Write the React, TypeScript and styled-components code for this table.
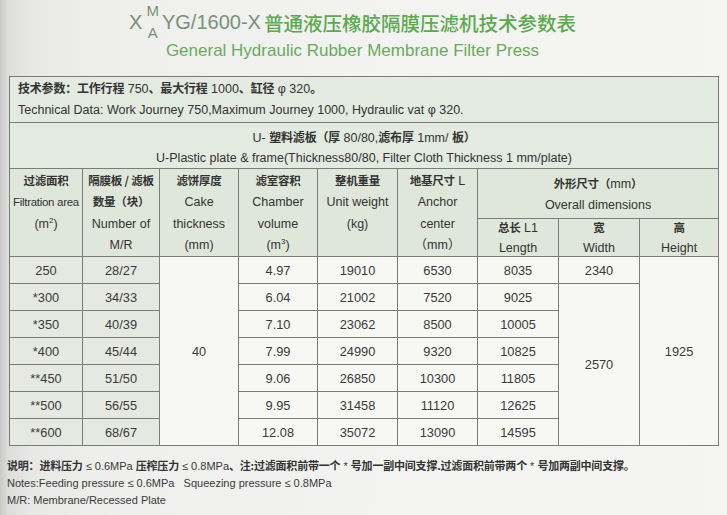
import React from 'react';
import styled, { createGlobalStyle } from 'styled-components';

const SANS = `"Liberation Sans", Arial, "Noto Sans CJK SC", sans-serif`;
const CJK = `"Noto Sans CJK SC", "Liberation Sans", sans-serif`;

const GlobalStyle = createGlobalStyle`
  html, body { margin: 0; padding: 0; }
  body { background: #eeeeec; font-family: ${SANS}; }
`;

const Page = styled.div`
  width: 727px;
  height: 515px;
  overflow: hidden;
  box-sizing: border-box;
  padding-left: 9px;
  display: flex;
  flex-direction: column;
  background: linear-gradient(90deg, #c9c9c7 0px, #dcdcda 8px, #e8e8e6 30px, #efefed 120px, #f3f3f1 60%, #f5f5f3 100%);
`;

const Header = styled.header`
  flex: 0 0 76px;
  width: 709px;
  box-sizing: border-box;
  padding-right: 22px;
  display: flex;
  flex-direction: column;
  align-items: center;
`;

const TitleRow = styled.div`
  display: flex;
  align-items: center;
  height: 44px;
`;

const Model = styled.span`
  font-family: ${SANS};
  font-size: 20px;
  color: #7a9176;
  line-height: 1;
`;

const Stack = styled.span`
  display: inline-flex;
  flex-direction: column;
  align-items: center;
  margin: 0 3px 0 4px;
  font-family: ${SANS};
  font-size: 15px;
  line-height: 22px;
  color: #7a9176;
`;

const TitleCn = styled.span`
  font-family: ${CJK};
  font-size: 19.5px;
  font-weight: 500;
  color: #5aaa4e;
  margin-left: 3px;
`;

const Subtitle = styled.div`
  font-family: ${SANS};
  font-size: 17px;
  color: #6aab5c;
  line-height: 20px;
  margin-top: -3px;
`;

const Table = styled.table`
  flex: 0 0 auto;
  width: 709px;
  border-collapse: collapse;
  table-layout: fixed;
  font-family: ${SANS};
  color: #333;
`;

const Row = styled.tr<{ $h: number }>`
  height: ${(p) => p.$h}px;
`;

const InfoCell = styled.td<{ $center?: boolean }>`
  border: 1px solid #7b7b79;
  background: #e3eadf;
  padding: ${(p) => (p.$center ? '5px 0 0 0' : '2px 0 0 8px')};
  text-align: ${(p) => (p.$center ? 'center' : 'left')};
  vertical-align: top;
  font-size: 12.5px;
  line-height: ${(p) => (p.$center ? '20px' : '21px')};
  color: #333;
`;

const Han = styled.span<{ $size: number }>`
  font-family: ${CJK};
  font-size: ${(p) => p.$size}px;
  font-weight: 700;
  line-height: 1;
  letter-spacing: -0.2px;
  color: #333;
`;

const Line = styled.div<{ $lh?: number; $mb?: number }>`
  ${(p) => (p.$lh ? `line-height: ${p.$lh}px;` : '')}
  ${(p) => (p.$mb ? `margin-bottom: ${p.$mb}px;` : '')}
`;

const HeadCell = styled.th<{ $pt?: number; $lh?: number }>`
  border: 1px solid #7b7b79;
  background: #dfe7da;
  font-weight: normal;
  vertical-align: top;
  padding: ${(p) => p.$pt ?? 2}px 0 0 0;
  text-align: center;
  font-size: 12.5px;
  line-height: ${(p) => p.$lh ?? 21.25}px;
  color: #333;
  white-space: nowrap;
`;

const TightLine = styled.div`
  font-size: 11.5px;
  letter-spacing: -0.3px;
`;

const Sup = styled.sup`
  font-size: 8px;
  vertical-align: 5px;
  line-height: 0;
`;

const DataCell = styled.td<{ $tint?: boolean }>`
  border: 1px solid #7b7b79;
  background: ${(p) => (p.$tint ? '#e5e9e1' : '#f7f7f4')};
  text-align: center;
  vertical-align: middle;
  font-size: 12.8px;
  color: #3a3a3a;
  padding: 0;
`;

const Notes = styled.div`
  margin: 12px 0 0 -2px;
  font-family: ${SANS};
  font-size: 11px;
  line-height: 17px;
  color: #3a3a3a;
`;

const colWidths = [73, 77, 79, 79, 80, 80, 81, 81, 79];

const rows = [
  { area: '250', num: '28/27', vol: '4.97', weight: '19010', anchor: '6530', len: '8035' },
  { area: '*300', num: '34/33', vol: '6.04', weight: '21002', anchor: '7520', len: '9025' },
  { area: '*350', num: '40/39', vol: '7.10', weight: '23062', anchor: '8500', len: '10005' },
  { area: '*400', num: '45/44', vol: '7.99', weight: '24990', anchor: '9320', len: '10825' },
  { area: '**450', num: '51/50', vol: '9.06', weight: '26850', anchor: '10300', len: '11805' },
  { area: '**500', num: '56/55', vol: '9.95', weight: '31458', anchor: '11120', len: '12625' },
  { area: '**600', num: '68/67', vol: '12.08', weight: '35072', anchor: '13090', len: '14595' },
];

const H = ({ children }: { children: React.ReactNode }) => <Han $size={11.5}>{children}</Han>;

export default function App() {
  return (
    <>
      <GlobalStyle />
      <Page>
        <Header>
          <TitleRow>
            <Model>X</Model>
            <Stack>
              <span>M</span>
              <span>A</span>
            </Stack>
            <Model>YG/1600-X</Model>
            <TitleCn>普通液压橡胶隔膜压滤机技术参数表</TitleCn>
          </TitleRow>
          <Subtitle>General Hydraulic Rubber Membrane Filter Press</Subtitle>
        </Header>
        <Table>
          <colgroup>
            {colWidths.map((w, i) => (
              <col key={i} style={{ width: w }} />
            ))}
          </colgroup>
          <tbody>
            <Row $h={46}>
              <InfoCell colSpan={9}>
                <Line>
                  <Han $size={12}>技术参数：工作行程</Han> 750<Han $size={12}>、最大行程</Han> 1000
                  <Han $size={12}>、缸径</Han> φ 320<Han $size={12}>。</Han>
                </Line>
                <Line>Technical Data: Work Journey 750,Maximum Journey 1000, Hydraulic vat φ 320.</Line>
              </InfoCell>
            </Row>
            <Row $h={46}>
              <InfoCell colSpan={9} $center>
                <Line>
                  U- <Han $size={12}>塑料滤板（厚</Han> 80/80,<Han $size={12}>滤布厚</Han> 1mm/ <Han $size={12}>板）</Han>
                </Line>
                <Line>U-Plastic plate &amp; frame(Thickness80/80, Filter Cloth Thickness 1 mm/plate)</Line>
              </InfoCell>
            </Row>
            <Row $h={50}>
              <HeadCell rowSpan={2}>
                <Line><H>过滤面积</H></Line>
                <TightLine>Filtration area</TightLine>
                <Line>
                  (m<Sup>2</Sup>)
                </Line>
              </HeadCell>
              <HeadCell rowSpan={2}>
                <Line><H>隔膜板 / 滤板</H></Line>
                <Line><H>数量（块）</H></Line>
                <Line>Number of</Line>
                <Line>M/R</Line>
              </HeadCell>
              <HeadCell rowSpan={2}>
                <Line><H>滤饼厚度</H></Line>
                <Line>Cake</Line>
                <Line>thickness</Line>
                <Line>(mm)</Line>
              </HeadCell>
              <HeadCell rowSpan={2}>
                <Line><H>滤室容积</H></Line>
                <Line>Chamber</Line>
                <Line>volume</Line>
                <Line>
                  (m<Sup>3</Sup>)
                </Line>
              </HeadCell>
              <HeadCell rowSpan={2}>
                <Line><H>整机重量</H></Line>
                <Line>Unit weight</Line>
                <Line>(kg)</Line>
              </HeadCell>
              <HeadCell rowSpan={2}>
                <Line><H>地基尺寸</H> L</Line>
                <Line>Anchor</Line>
                <Line>center</Line>
                <Line>（mm）</Line>
              </HeadCell>
              <HeadCell colSpan={3} $pt={5} $lh={21}>
                <Line><H>外形尺寸（</H>mm<H>）</H></Line>
                <Line>Overall dimensions</Line>
              </HeadCell>
            </Row>
            <Row $h={38}>
              <HeadCell $pt={0}>
                <Line $lh={18}><H>总长</H> L1</Line>
                <Line $lh={22} $mb={-3}>Length</Line>
              </HeadCell>
              <HeadCell $pt={0}>
                <Line $lh={18}><H>宽</H></Line>
                <Line $lh={22} $mb={-3}>Width</Line>
              </HeadCell>
              <HeadCell $pt={0}>
                <Line $lh={18}><H>高</H></Line>
                <Line $lh={22} $mb={-3}>Height</Line>
              </HeadCell>
            </Row>
            {rows.map((r, i) => (
              <Row $h={27} key={r.area}>
                <DataCell $tint>{r.area}</DataCell>
                <DataCell $tint>{r.num}</DataCell>
                {i === 0 && <DataCell rowSpan={7}>40</DataCell>}
                <DataCell>{r.vol}</DataCell>
                <DataCell>{r.weight}</DataCell>
                <DataCell>{r.anchor}</DataCell>
                <DataCell>{r.len}</DataCell>
                {i === 0 && <DataCell>2340</DataCell>}
                {i === 1 && <DataCell rowSpan={6}>2570</DataCell>}
                {i === 0 && <DataCell rowSpan={7}>1925</DataCell>}
              </Row>
            ))}
          </tbody>
        </Table>
        <Notes>
          <Line>
            <Han $size={11}>说明：进料压力</Han> ≤ 0.6MPa <Han $size={11}>压榨压力</Han> ≤ 0.8MPa
            <Han $size={11}>、注:过滤面积前带一个</Han> * <Han $size={11}>号加一副中间支撑.过滤面积前带两个</Han> *{' '}
            <Han $size={11}>号加两副中间支撑。</Han>
          </Line>
          <Line>Notes:Feeding pressure ≤ 0.6MPa&nbsp;&nbsp;&nbsp;Squeezing pressure ≤ 0.8MPa</Line>
          <Line>M/R: Membrane/Recessed Plate</Line>
        </Notes>
      </Page>
    </>
  );
}
